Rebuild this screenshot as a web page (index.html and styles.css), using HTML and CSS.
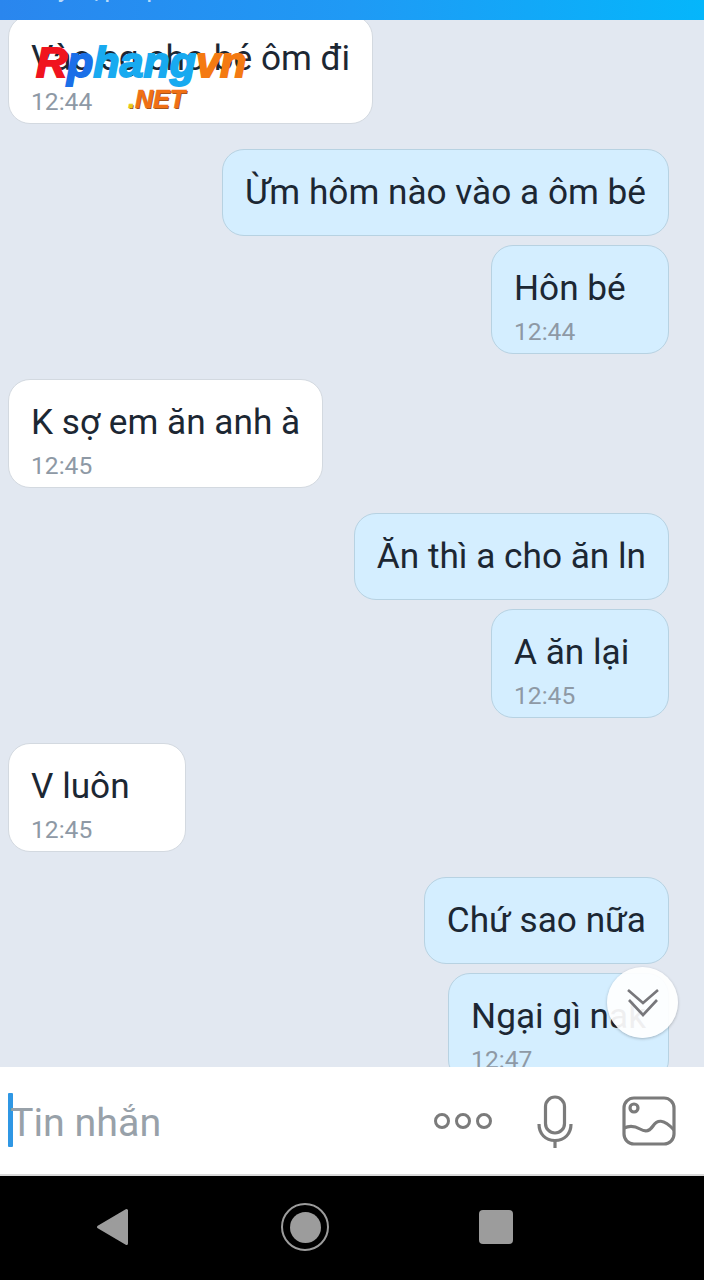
FILE: index.html
```html
<!DOCTYPE html>
<html lang="vi">
<head>
<meta charset="utf-8">
<title>Tin nhắn</title>
<link rel="stylesheet" href="styles.css">
</head>
<body>
<div class="screen">
	<div class="topbar"><span class="topbar-text">Truy cập 1 phút trước</span></div>

	<div class="chat">
		<div class="thread">
			<div class="row them first"><div class="bubble"><p class="msg">Vào sg cho bé ôm đi</p><p class="time">12:44</p></div></div>
			<div class="row me gap"><div class="bubble"><p class="msg">Ừm hôm nào vào a ôm bé</p></div></div>
			<div class="row me"><div class="bubble"><p class="msg">Hôn bé</p><p class="time">12:44</p></div></div>
			<div class="row them gap"><div class="bubble"><p class="msg">K sợ em ăn anh à</p><p class="time">12:45</p></div></div>
			<div class="row me gap"><div class="bubble"><p class="msg">Ăn thì a cho ăn ln</p></div></div>
			<div class="row me"><div class="bubble"><p class="msg">A ăn lại</p><p class="time">12:45</p></div></div>
			<div class="row them gap"><div class="bubble"><p class="msg">V luôn</p><p class="time">12:45</p></div></div>
			<div class="row me gap"><div class="bubble"><p class="msg">Chứ sao nữa</p></div></div>
			<div class="row me"><div class="bubble"><p class="msg">Ngại gì nak</p><p class="time">12:47</p></div></div>
		</div>

		<div class="watermark">
			<div class="wm-name"><span class="wm-r">R</span><span class="wm-p">p</span><span class="wm-h">hang</span><span class="wm-v">vn</span></div>
			<div class="wm-net"><span class="wm-dot">.</span>NET</div>
		</div>

		<div class="scroll-down">
			<svg width="34" height="30" viewBox="0 0 34 30" fill="none" stroke="#77777b" stroke-width="2.6">
				<path d="M2 2 L17 15 L32 2"/>
				<path d="M3 12 L17 27 L31 12"/>
			</svg>
		</div>
	</div>

	<div class="composer">
		<div class="input"><span class="caret"></span><span class="placeholder">Tin nhắn</span></div>
		<div class="tools">
			<svg class="tool-more" width="60" height="18" viewBox="0 0 60 18" fill="none" stroke="#7b7b7b" stroke-width="3">
				<circle cx="9" cy="9" r="6.5"/>
				<circle cx="30" cy="9" r="6.5"/>
				<circle cx="51" cy="9" r="6.5"/>
			</svg>
			<svg class="tool-mic" width="36" height="54" viewBox="0 0 36 54" fill="none" stroke="#7b7b7b" stroke-width="3.2">
				<rect x="8.5" y="2" width="19" height="36" rx="9.5"/>
				<path d="M2 29 C2 39 8.5 45.5 18 45.5 C27.5 45.5 34 39 34 29"/>
				<path d="M18 45.5 V53"/>
			</svg>
			<svg class="tool-image" width="54" height="50" viewBox="0 0 54 50" fill="none" stroke="#7b7b7b" stroke-width="3.2">
				<rect x="2" y="2" width="50" height="46" rx="10"/>
				<circle cx="12" cy="12" r="4"/>
				<path d="M2 32 C8 29 13 30 18 33 C23 36 27 36 31 30 C35 24 41 22 52 34"/>
			</svg>
		</div>
	</div>

	<div class="navbar">
		<svg width="36" height="40" viewBox="0 0 36 40"><path d="M30.5 3.5 V36.5 L2.5 20 Z" fill="#9c9c9c" stroke="#9c9c9c" stroke-width="3" stroke-linejoin="round"/></svg>
		<div class="nav-home"><span class="nav-home-dot"></span></div>
		<div class="nav-square"></div>
	</div>
</div>
</body>
</html>
```

FILE: styles.css
```css
html,body{margin:0; padding:0; background:#000;}
p{margin:0;}
.screen{width:704px; height:1280px; display:flex; flex-direction:column; overflow:hidden; font-family:Roboto,"Noto Sans",sans-serif;}

.topbar{height:20px; flex:none; overflow:hidden; background:linear-gradient(90deg,#2a86ee,#1f9af5 50%,#05b6fb);}
.topbar-text{display:block; margin:-27px 0 0 20px; font-size:26px; line-height:30px; color:#b9dcfa; white-space:nowrap;}

.chat{height:1047px; flex:none; position:relative; overflow:hidden; background:#e2e8f1;}
.thread{display:flex; flex-direction:column; gap:9px; padding:0 35px 0 8px;}
.row{display:flex;}
.row.first{margin-top:-5px;}
.row.gap{margin-top:16px;}
.row.me{justify-content:flex-end;}
.bubble{box-sizing:border-box; min-width:178px; min-height:87px; padding:22px 22px 6px; border-radius:22px; border:1px solid #d3d9e0; background:#fff;}
.me .bubble{background:#d4eeff; border-color:#b7d2e2;}
.msg{font-size:35.2px; line-height:40px; color:#1c2733; white-space:nowrap;}
.time{font-size:24.6px; line-height:30px; margin-top:9px; color:#8e99a5;}

.watermark{position:absolute; left:36px; top:21px; width:210px; font-family:"Liberation Sans",sans-serif; font-weight:bold; font-style:italic; text-align:center;}
.wm-name{font-size:43px; line-height:42px; white-space:nowrap; -webkit-text-stroke:1.8px currentColor;}
.wm-r{color:#f0141e;}
.wm-p{color:#1a6fe8;}
.wm-h{color:#18aaf0;}
.wm-v{color:#f47a12;}
.wm-net{margin-top:3px; padding-left:31px; font-size:25px; line-height:26px; color:#f07014; -webkit-text-stroke:0.6px currentColor; text-shadow:1px 1px 0 #8a4a1c;}
.wm-dot{color:#e8c814;}

.scroll-down{position:absolute; left:607px; top:947px; width:71px; height:71px; display:flex; align-items:center; justify-content:center; border-radius:50%; background:rgba(255,255,255,0.93); box-shadow:0 1px 3px rgba(0,0,0,0.25);}

.composer{height:107px; flex:none; display:flex; align-items:center; justify-content:space-between; background:#fff; border-bottom:2px solid #d8d8d8;}
.input{display:flex; align-items:center; padding-left:8px;}
.caret{width:5px; height:54px; margin-top:-2px; margin-right:-3px; background:#2f97e4; border-radius:1px;}
.placeholder{margin-top:4px; font-size:39.4px; line-height:54px; color:#98a1a9;}
.tools{display:flex; align-items:center; padding-right:28px;}
.tool-more{margin-right:44px;}
.tool-mic{margin:2px 49px 0 0;}

.navbar{height:104px; flex:none; box-sizing:border-box; display:flex; align-items:center; padding:0 0 2px 96px; background:#000;}
.nav-home{width:44px; height:44px; margin-left:149px; border:2px solid #9c9c9c; border-radius:50%; display:flex; align-items:center; justify-content:center;}
.nav-home-dot{width:31px; height:31px; border-radius:50%; background:#9c9c9c;}
.nav-square{width:34px; height:34px; margin-left:150px; border-radius:4px; background:#9c9c9c;}
```
